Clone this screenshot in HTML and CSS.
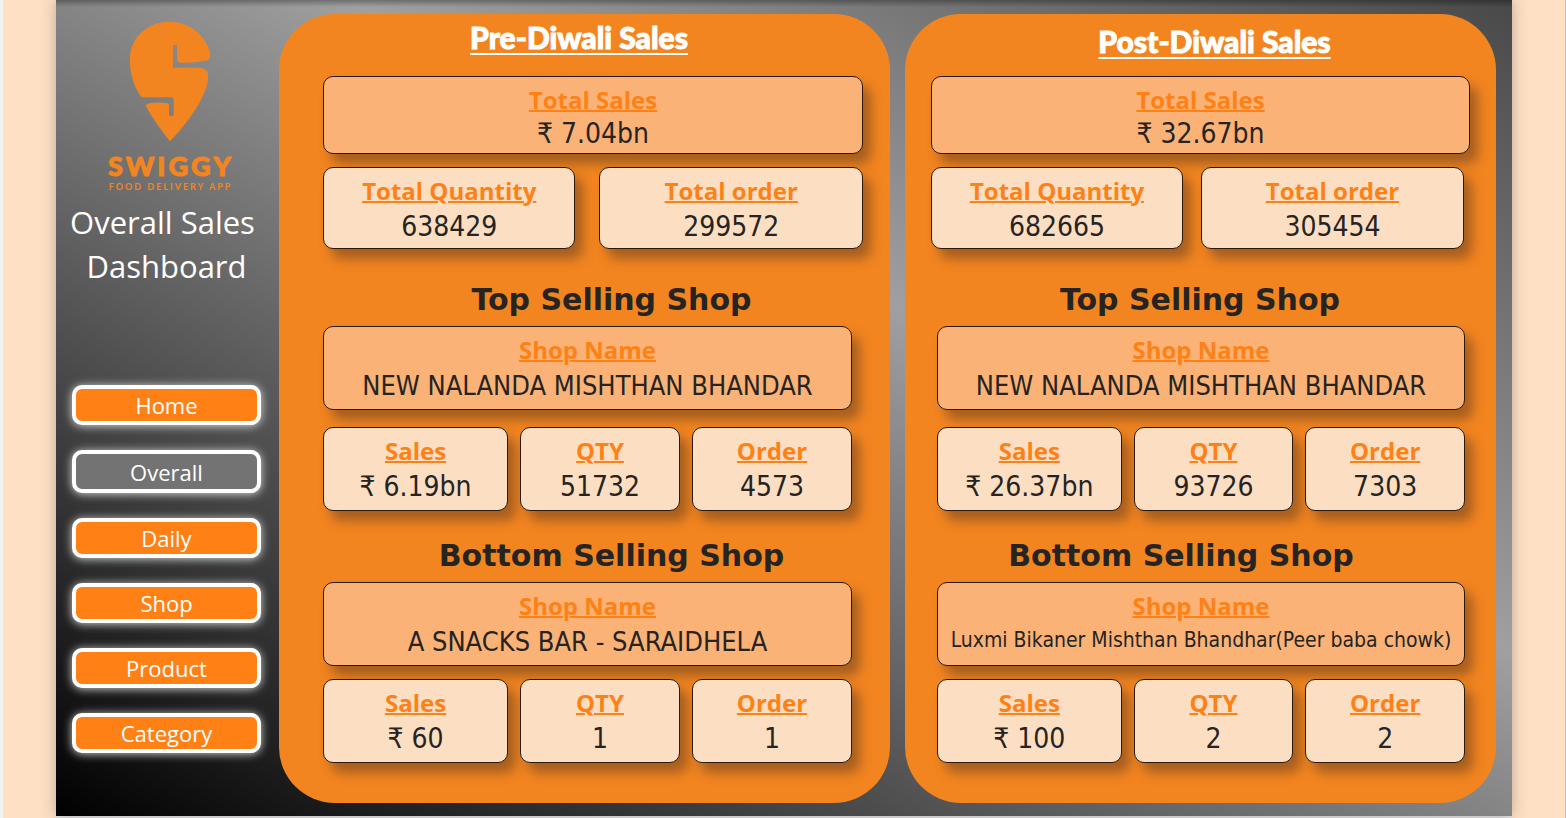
FILE: index.html
```html
<!DOCTYPE html>
<html lang="en">
<head>
<meta charset="utf-8">
<meta name="viewport" content="width=device-width, initial-scale=1">
<title>Swiggy – Overall Sales Dashboard</title>
<link rel="stylesheet" href="styles.css">
</head>
<body>
<div class="stage">
  <aside class="sidebar">
    <div class="brand">
      <svg class="brand-pin" viewBox="88 18 244 362" aria-hidden="true">
        <path d="M210 20C272 20 318 66 330 112V127Q329 134 314 137Q288 143 240 143Q231 142 231 133V90H219V158H296Q316 159 322 170Q324 176 324 190C321 232 284 290 256 325Q236 352 210 378Q166 325 137 271Q138 265 152 263Q178 260 203 264Q207 265 207 272V299Q214 306 221 299V254Q221 246 213 246H125C104 221 90 176 90 133C90 66 144 20 210 20Z"/>
      </svg>
      <span class="brand-name">SWIGGY</span>
      <span class="brand-tag">FOOD DELIVERY APP</span>
    </div>
    <h1 class="page-title">Overall Sales&nbsp;<br>Dashboard</h1>
    <nav class="nav">
      <button class="nav-button" type="button">Home</button>
      <button class="nav-button current" type="button" aria-current="page">Overall</button>
      <button class="nav-button" type="button">Daily</button>
      <button class="nav-button" type="button">Shop</button>
      <button class="nav-button" type="button">Product</button>
      <button class="nav-button" type="button">Category</button>
    </nav>
  </aside>
  <main class="panels">
    <section class="panel pre">
      <h2 class="panel-title">Pre-Diwali Sales</h2>
      <div class="card strong total"><h4>Total Sales</h4><p>₹ 7.04bn</p></div>
      <div class="row pair">
        <div class="card"><h4>Total Quantity</h4><p>638429</p></div>
        <div class="card"><h4>Total order</h4><p>299572</p></div>
      </div>
      <div class="shop">
        <h3>Top Selling Shop</h3>
        <div class="card strong"><h4>Shop Name</h4><p class="name">NEW NALANDA MISHTHAN BHANDAR</p></div>
        <div class="row stats">
          <div class="card"><h4>Sales</h4><p>₹ 6.19bn</p></div>
          <div class="card"><h4>QTY</h4><p>51732</p></div>
          <div class="card"><h4>Order</h4><p>4573</p></div>
        </div>
      </div>
      <div class="shop bottom">
        <h3>Bottom Selling Shop</h3>
        <div class="card strong"><h4>Shop Name</h4><p class="name">A SNACKS BAR - SARAIDHELA</p></div>
        <div class="row stats">
          <div class="card"><h4>Sales</h4><p>₹ 60</p></div>
          <div class="card"><h4>QTY</h4><p>1</p></div>
          <div class="card"><h4>Order</h4><p>1</p></div>
        </div>
      </div>
    </section>
    <section class="panel post">
      <h2 class="panel-title">Post-Diwali Sales</h2>
      <div class="card strong total"><h4>Total Sales</h4><p>₹ 32.67bn</p></div>
      <div class="row pair">
        <div class="card"><h4>Total Quantity</h4><p>682665</p></div>
        <div class="card"><h4>Total order</h4><p>305454</p></div>
      </div>
      <div class="shop">
        <h3>Top Selling Shop</h3>
        <div class="card strong"><h4>Shop Name</h4><p class="name">NEW NALANDA MISHTHAN BHANDAR</p></div>
        <div class="row stats">
          <div class="card"><h4>Sales</h4><p>₹ 26.37bn</p></div>
          <div class="card"><h4>QTY</h4><p>93726</p></div>
          <div class="card"><h4>Order</h4><p>7303</p></div>
        </div>
      </div>
      <div class="shop bottom">
        <h3>Bottom Selling Shop</h3>
        <div class="card strong"><h4>Shop Name</h4><p class="name long">Luxmi Bikaner Mishthan Bhandhar(Peer baba chowk)</p></div>
        <div class="row stats">
          <div class="card"><h4>Sales</h4><p>₹ 100</p></div>
          <div class="card"><h4>QTY</h4><p>2</p></div>
          <div class="card"><h4>Order</h4><p>2</p></div>
        </div>
      </div>
    </section>
  </main>
</div>
</body>
</html>
```
FILE: styles.css
```css
* { box-sizing: border-box; }
body {
  margin: 0;
  min-height: 100vh;
  padding: 0 53px 2px 53px;
  background: #fee0c5;
  border-left: 3px solid #f2f2f2;
  border-right: 1px solid #c4bcb6;
  font-family: "Open Sans", "Noto Sans", sans-serif;
}
h1, h2, h3, h4, p { margin: 0; font-weight: 400; }
.stage {
  display: flex;
  min-height: calc(100vh - 2px);
  background:
    linear-gradient(rgba(0, 0, 0, .3), transparent 7px),
    linear-gradient(to top right, #000 0%, #a0a0a0 60%, #484848 100%);
  box-shadow: 0 0 14px rgba(90, 80, 80, .4), 0 2px 0 #e4e4e4;
}
.sidebar {
  flex: 0 0 223px;
  min-width: 0;
  display: flex;
  flex-direction: column;
  align-items: center;
  padding: 21px 18px 0 16px;
}
.brand { display: flex; flex-direction: column; align-items: center; color: #f38520; padding-left: 6px; }
.brand-pin { width: 82px; height: 121px; fill: #f38520; }
.brand-name { font: 900 27px/32px "Lato Black", Lato, sans-serif; margin-top: 8px; letter-spacing: 3px; margin-right: -3px; -webkit-text-stroke: 1px #f38520; }
.brand-tag { font: 700 9px/10px Lato, sans-serif; letter-spacing: 2px; margin-right: -2px; white-space: nowrap; }
.page-title { margin-top: 8px; color: #fff; font-size: 31px; line-height: 44px; text-align: center; white-space: nowrap; }
.nav { display: flex; flex-direction: column; gap: 25px; width: 100%; margin-top: 97px; }
.nav-button {
  width: 100%;
  height: 40px;
  padding: 0;
  border: 4px solid #fff;
  border-radius: 10px;
  background: #ff8116;
  color: #fff;
  font: 400 22px/32px "Open Sans", "Noto Sans", sans-serif;
  box-shadow: 0 1px 10px rgba(255, 255, 255, .8);
}
.nav-button.current { height: 43px; background: #737373; }
.panels {
  flex: 1;
  display: grid;
  grid-template-columns: 611fr 591fr;
  gap: 15px;
  padding: 14px 16px 13px 0;
}
.panel { background: #f38520; border-radius: 56px; color: #252423; text-align: center; }
.pre { padding: 0 27px 36px 44px; }
.post { padding: 0 26px 36px 26px; }
.panel-title {
  height: 62px;
  color: #fff;
  font: 900 30px/32px "Lato Black", Lato, sans-serif;
  -webkit-text-stroke: 1px #fff;
  text-decoration: underline;
  text-decoration-thickness: 2px;
  text-underline-offset: 4px;
}
.pre .panel-title { padding: 7px 28px 0 0; }
.post .panel-title { padding-top: 11px; padding-left: 28px; }
.card {
  height: 84px;
  padding-top: 6px;
  border: 1px solid #2b1a0c;
  border-radius: 10px;
  background: #fcdec2;
  box-shadow: 8px 10px 12px rgba(60, 40, 30, .42);
  white-space: nowrap;
}
.card.strong { background: #fab277; }
.card h4 {
  color: #ff8116;
  font-size: 24px;
  font-weight: 700;
  line-height: 34px;
  text-decoration: underline;
  text-decoration-thickness: 2px;
}
.card p { font: 400 28px/38px "DejaVu Sans Condensed", "Noto Sans", sans-serif; }
.card p.name { font-size: 27px; }
.card p.long { font-size: 21px; line-height: 34px; }
.card.total { height: 78px; }
.card.total p { line-height: 34px; }
.row { display: grid; }
.pair { grid-template-columns: 252fr 263fr; margin-top: 13px; }
.pair .card { height: 82px; }
.pre .pair { gap: 24px; }
.post .pair { gap: 18px; padding-right: 6px; }
.shop { margin-top: 30px; }
.pre .shop { padding-right: 11px; }
.post .shop { padding: 0 5px 0 6px; }
.shop h3 { margin-bottom: 5px; font: 700 30px/42px "DejaVu Sans", sans-serif; }
.pre .shop h3 { padding-left: 48px; }
.post .shop h3 { padding-right: 2px; }
.post .bottom h3 { padding-right: 40px; }
.shop.bottom { margin-top: 24px; }
.stats { grid-template-columns: 185fr 160fr 160fr; gap: 12px; margin-top: 17px; }
.bottom .stats { margin-top: 13px; }
```
